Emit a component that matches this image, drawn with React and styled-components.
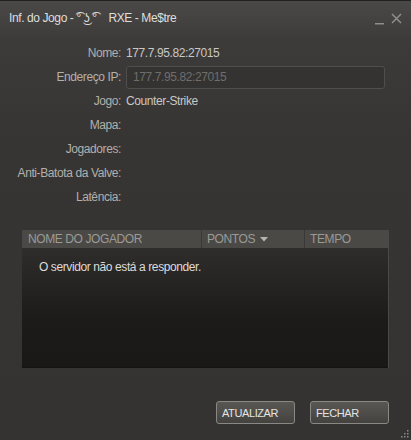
import styled, { createGlobalStyle } from "styled-components";

const GlobalStyle = createGlobalStyle`
  html, body {
    margin: 0;
    padding: 0;
    background: #353433;
  }
  body {
    font-family: Arial, "Liberation Sans", sans-serif;
    letter-spacing: -0.4px;
  }
`;

const Window = styled.div`
  width: 411px;
  height: 440px;
  box-sizing: border-box;
  background: linear-gradient(#4a4948 0px, #3c3b3a 40px, #363534 140px, #343332 100%);
  border-top: 1px solid #222;
  display: flex;
  flex-direction: column;
  position: relative;
  overflow: hidden;
`;

const TitleBar = styled.div`
  height: 33px;
  display: flex;
  align-items: center;
  padding: 0 9px 0 9px;
  color: #dedede;
  font-size: 12px;
`;

const Title = styled.div`
  flex: 1;
  white-space: pre;
  font-family: Arial, "Liberation Sans", "DejaVu Sans", sans-serif;
`;

const WinButtons = styled.div`
  display: flex;
  align-items: center;
  gap: 6px;
  color: #8e8e8e;
  margin-top: 2px;
`;

const Info = styled.div`
  display: grid;
  grid-template-columns: 121px 1fr;
  grid-auto-rows: 24px;
  column-gap: 5px;
  padding: 7px 26px 0 0;
  font-size: 12px;
  align-items: center;
`;

const Label = styled.div`
  text-align: right;
  color: #b2b0ab;
`;

const Value = styled.div`
  color: #c9c8c4;
`;

const IpInput = styled.div`
  height: 23px;
  box-sizing: border-box;
  border: 1px solid #4f4e4c;
  border-radius: 3px;
  background: #343332;
  color: #6f6e6b;
  display: flex;
  align-items: center;
  padding-left: 6px;
`;

const Table = styled.div`
  margin: 21px 22px 0 22px;
  height: 138px;
  display: flex;
  flex-direction: column;
  border-right: 1px solid #4a4948;
`;

const Header = styled.div`
  display: grid;
  grid-template-columns: 179px 103px 1fr;
  height: 18px;
  background: #4a4946;
  color: #9b9a96;
  font-size: 12px;
`;

const HeadCell = styled.div`
  display: flex;
  align-items: center;
  padding-left: ${(p) => (p.$first ? "6px" : "5px")};
  border-left: ${(p) => (p.$first ? "none" : "1px solid #3a3937")};
  gap: 5px;
`;

const Body = styled.div`
  flex: 1;
  background: linear-gradient(#2e2d2b, #1c1b19 60%, #191816);
  border-bottom: 1px solid #141312;
  padding: 12px 0 0 17px;
  color: #dcdcdc;
  font-size: 12px;
`;

const Footer = styled.div`
  display: flex;
  justify-content: flex-end;
  gap: 15px;
  padding: 33px 22px 0 0;
`;

const Button = styled.div`
  width: 79px;
  height: 23px;
  box-sizing: border-box;
  border: 1px solid #8a8884;
  border-radius: 3px;
  background: linear-gradient(#5a5753, #44423f);
  color: #e4e4e4;
  font-size: 11px;
  display: flex;
  align-items: center;
  padding-left: 5px;
`;

const Grip = styled.svg`
  position: absolute;
  right: 2px;
  bottom: 2px;
`;

const rows = [
  ["Nome:", "177.7.95.82:27015"],
  ["Endereço IP:", null],
  ["Jogo:", "Counter-Strike"],
  ["Mapa:", ""],
  ["Jogadores:", ""],
  ["Anti-Batota da Valve:", ""],
  ["Latência:", ""],
];

export default function App() {
  return (
    <Window>
      <GlobalStyle />
      <TitleBar>
        <Title>{"Inf. do Jogo - ͡° ͜ʖ ͡°    RXE - Me$tre"}</Title>
        <WinButtons>
          <svg width="10" height="12" viewBox="0 0 10 12">
            <rect x="0" y="10" width="9" height="1.5" fill="#8e8e8e" />
          </svg>
          <svg width="11" height="11" viewBox="0 0 11 11">
            <path d="M1 1 L10 10 M10 1 L1 10" stroke="#8e8e8e" strokeWidth="1.5" />
          </svg>
        </WinButtons>
      </TitleBar>
      <Info>
        {rows.map(([label, value]) => (
          <>
            <Label key={label}>{label}</Label>
            {value === null ? (
              <IpInput>177.7.95.82:27015</IpInput>
            ) : (
              <Value>{value}</Value>
            )}
          </>
        ))}
      </Info>
      <Table>
        <Header>
          <HeadCell $first>NOME DO JOGADOR</HeadCell>
          <HeadCell>
            PONTOS
            <svg width="8" height="5" viewBox="0 0 8 5">
              <path d="M0 0 L8 0 L4 4.5 Z" fill="#b5b4b0" />
            </svg>
          </HeadCell>
          <HeadCell>TEMPO</HeadCell>
        </Header>
        <Body>O servidor não está a responder.</Body>
      </Table>
      <Footer>
        <Button>ATUALIZAR</Button>
        <Button>FECHAR</Button>
      </Footer>
      <Grip width="10" height="10" viewBox="0 0 10 10">
        {[
          [8, 0],
          [8, 3],
          [5, 3],
          [8, 6],
          [5, 6],
          [2, 6],
        ].map(([x, y]) => (
          <rect key={`${x}-${y}`} x={x} y={y + 2} width="1.5" height="1.5" fill="#8a8a8a" />
        ))}
      </Grip>
    </Window>
  );
}
